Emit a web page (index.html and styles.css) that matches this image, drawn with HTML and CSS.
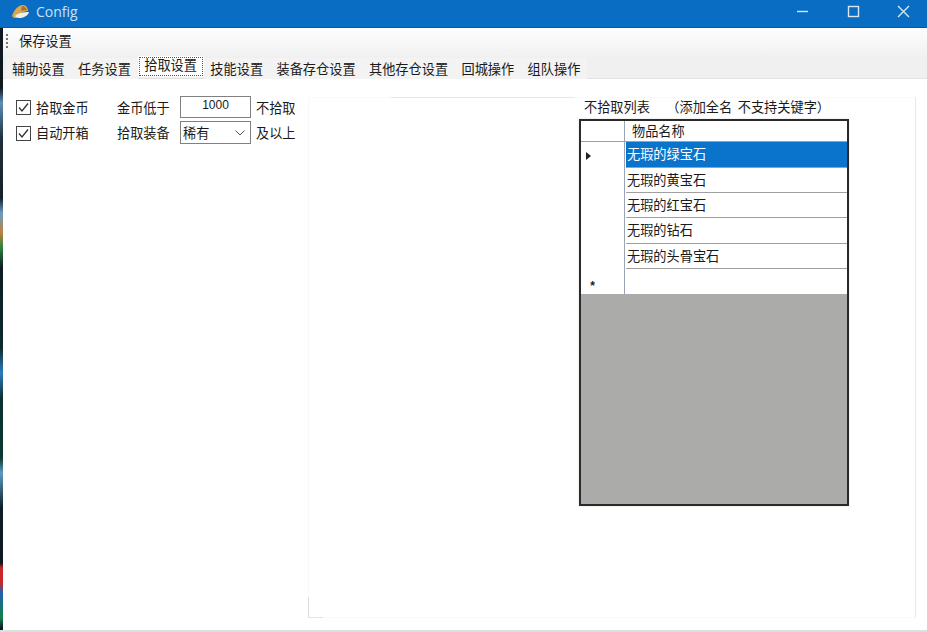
FILE: index.html
```html
<!DOCTYPE html>
<html lang="zh-CN">
<head>
  <meta charset="UTF-8">
  <title>Config</title>
  <link rel="stylesheet" href="styles.css">
</head>
<body>
  <div class="desk-strip"></div>
  <div class="window">
    <div class="titlebar">
      <svg class="app-icon" width="18" height="14" viewBox="0 0 18 14">
        <path d="M1 11 C3 5 7 0 12 0 C15 0 17 3 17 6 C13 6 9 8 7 12 C5 14 2 13 1 11 Z" fill="#d8a850"/>
        <path d="M4 11 C7 8 12 7 18 7 C17 11 12 13 8 13 C6 13 5 12 4 11 Z" fill="#f4efe0"/>
        <path d="M11 1 C13 1 15 3 16 5 C14 5 12 5 10 6 Z" fill="#a8702a"/>
      </svg>
      <span class="title">Config</span>
      <div class="win-buttons">
        <svg class="win-btn" width="50" height="28" viewBox="0 0 50 28"><path d="M22 11.5 H33" stroke="#d4e8f8" stroke-width="1.4"/></svg>
        <svg class="win-btn" width="50" height="28" viewBox="0 0 50 28"><rect x="23.5" y="6.5" width="10" height="10" fill="none" stroke="#d4e8f8" stroke-width="1.4"/></svg>
        <svg class="win-btn" width="50" height="28" viewBox="0 0 50 28"><path d="M23 6 L34 17 M34 6 L23 17" stroke="#d4e8f8" stroke-width="1.4"/></svg>
      </div>
    </div>

    <div class="toolbar">
      <span class="grip"></span>
      <span class="tool-item">保存设置</span>
    </div>

    <div class="tabs">
      <span class="tab">辅助设置</span>
      <span class="tab">任务设置</span>
      <span class="tab active">拾取设置</span>
      <span class="tab">技能设置</span>
      <span class="tab">装备存仓设置</span>
      <span class="tab">其他存仓设置</span>
      <span class="tab">回城操作</span>
      <span class="tab">组队操作</span>
    </div>

    <div class="content">
      <div class="left-col">
        <div class="form-row">
          <label class="check-label">
            <svg class="checkbox" width="15" height="15" viewBox="0 0 15 15"><rect x="0.5" y="0.5" width="14" height="14" fill="#fff" stroke="#444"/><path d="M3 7.5 L6 11 L12 3.5" fill="none" stroke="#333" stroke-width="1.3"/></svg>
            拾取金币
          </label>
          <span class="field-label">金币低于</span>
          <div class="text-box">1000</div>
          <span class="after">不拾取</span>
        </div>
        <div class="form-row tall">
          <label class="check-label">
            <svg class="checkbox" width="15" height="15" viewBox="0 0 15 15"><rect x="0.5" y="0.5" width="14" height="14" fill="#fff" stroke="#444"/><path d="M3 7.5 L6 11 L12 3.5" fill="none" stroke="#333" stroke-width="1.3"/></svg>
            自动开箱
          </label>
          <span class="field-label">拾取装备</span>
          <div class="combo">
            <span>稀有</span>
            <svg width="10" height="6" viewBox="0 0 10 6"><path d="M0.5 0.5 L5 5 L9.5 0.5" fill="none" stroke="#555"/></svg>
          </div>
          <span class="after">及以上</span>
        </div>
      </div>

      <div class="group">
        <div class="group-label">不拾取列表 &nbsp; （添加全名 不支持关键字）</div>
        <div class="grid-view">
          <div class="grid-row head"><span class="row-head"></span><span class="cell head-cell">物品名称</span></div>
          <div class="grid-row selected"><span class="row-head"><i class="arrow"></i></span><span class="cell">无瑕的绿宝石</span></div>
          <div class="grid-row"><span class="row-head"></span><span class="cell">无瑕的黄宝石</span></div>
          <div class="grid-row"><span class="row-head"></span><span class="cell">无瑕的红宝石</span></div>
          <div class="grid-row"><span class="row-head"></span><span class="cell">无瑕的钻石</span></div>
          <div class="grid-row"><span class="row-head"></span><span class="cell">无瑕的头骨宝石</span></div>
          <div class="grid-row new-row"><span class="row-head"><b class="star">*</b></span><span class="cell"></span></div>
          <div class="grid-empty"></div>
        </div>
      </div>
    </div>
  </div>
</body>
</html>
```

FILE: styles.css
```css
* { box-sizing: border-box; }
html, body {
  margin: 0;
  height: 632px;
  overflow: hidden;
}
body {
  display: flex;
  font-family: "Noto Sans CJK SC", "Liberation Sans", sans-serif;
  font-size: 13.2px;
  color: #1a1a1a;
  background: #fff;
}
.desk-strip {
  width: 3px;
  margin-top: 28px;
  background: linear-gradient(to bottom, #101820 0, #101820 60px, #5c8fb8 75px, #20303c 110px, #14202a 170px, #6a9cc4 185px, #c08040 205px, #2a8040 220px, #0c1c20 240px, #0c2a30 320px, #2c7cc0 345px, #0c3030 370px, #0c3830 430px, #5c9cc0 445px, #0c1c28 480px, #101820 535px, #c82828 540px, #c82828 555px, #2060b0 565px, #108048 590px, #101828 600px);
}
.window {
  flex: 1;
  display: flex;
  flex-direction: column;
  min-width: 0;
  margin-left: -3px;
  border-bottom: 2px solid #d8e0e2;
}
.titlebar {
  height: 28px;
  flex: none;
  display: flex;
  align-items: center;
  background: #0a6dc4;
  border-bottom: 1px solid #0a5c8c;
  padding-left: 11px;
}
.app-icon { margin-right: 7px; margin-top: -4px; }
.title {
  font-family: "Open Sans", "Liberation Sans", sans-serif;
  font-size: 14px;
  color: #c8e2f6;
  margin-top: -4px;
}
.win-buttons {
  display: flex;
  margin-left: auto;
  margin-right: 2px;
  align-self: flex-start;
}
.win-btn { display: block; }
.toolbar {
  height: 27px;
  flex: none;
  display: flex;
  align-items: center;
  margin-left: 3px;
  padding-left: 3px;
  background: linear-gradient(to bottom, #fdfdfd, #f2f2f2);
}
.grip {
  width: 2px;
  height: 16px;
  margin-top: 1px;
  background: repeating-linear-gradient(to bottom, #777 0, #777 2px, transparent 2px, transparent 4px);
}
.tool-item { margin-left: 11px; margin-top: -3px; }
.tabs {
  height: 24px;
  flex: none;
  display: flex;
  align-items: flex-end;
  margin-left: 3px;
  padding-left: 2.3px;
  background: #f0f0f0;
  border-bottom: 1px solid #e2e2e2;
}
.tab {
  height: 21px;
  padding: 0 6.7px;
  line-height: 21px;
  white-space: nowrap;
  background: #f3f3f3;
  margin-bottom: -1px;
}
.tab.active {
  height: 21px;
  margin-bottom: 1px;
  line-height: 17px;
  background: #fff;
  outline: 1px dotted #555;
  outline-offset: -2px;
}
.content {
  flex: 1;
  display: flex;
  margin-left: 3px;
  background: #fff;
  min-height: 0;
}
.left-col {
  width: 305px;
  flex: none;
  padding: 17px 0 0 13px;
}
.form-row {
  display: flex;
  align-items: center;
  height: 22px;
  margin-bottom: 4px;
}
.form-row.tall { height: 23px; margin-top: -1px; }
.check-label {
  width: 101px;
  flex: none;
  display: flex;
  align-items: center;
  gap: 5px;
}
.checkbox { margin-top: 1px; }
.field-label { width: 63px; flex: none; }
.text-box {
  width: 71px;
  height: 22px;
  flex: none;
  border: 1px solid #808080;
  text-align: center;
  font-family: "Liberation Sans", sans-serif;
  font-size: 12px;
  line-height: 17px;
}
.combo {
  width: 71px;
  height: 23px;
  flex: none;
  display: flex;
  align-items: center;
  justify-content: space-between;
  padding: 0 5px 0 2px;
  border: 1px solid #808080;
}
.after { margin-left: 5px; }
.group {
  position: relative;
  width: 608px;
  height: 521px;
  margin-top: 18px;
  padding: 0 0 0 270px;
  border: 1px solid #f9f9f9;
  border-right-color: #e4e8f0;
}
.group::before {
  content: "";
  position: absolute;
  left: -1px;
  bottom: -1px;
  width: 14px;
  height: 20px;
  border-left: 1px solid #dcdcdc;
  border-bottom: 1px solid #e6e6e6;
}
.group::after {
  content: "";
  position: absolute;
  left: 82px;
  right: 340px;
  top: -1px;
  height: 1px;
  background: #e8e8e8;
}
.group-label {
  height: 21px;
  padding-left: 5px;
  line-height: 18px;
  white-space: nowrap;
  word-spacing: 2.5px;
}
.grid-view {
  width: 270px;
  height: 387px;
  display: flex;
  flex-direction: column;
  border: 2px solid #2a2a2a;
  background: #fff;
  box-shadow: 0 0 2px #ddd;
}
.grid-row {
  display: flex;
  height: 25.4px;
  flex: none;
}
.grid-row.head { height: 20.5px; border-bottom: 1px solid #a0a0a0; }
.grid-row.selected { height: 26px; }
.grid-row.new-row { height: 25px; }
.row-head {
  width: 44px;
  flex: none;
  display: flex;
  align-items: center;
  justify-content: center;
  border-right: 1px solid #9aa4b4;
  margin-right: 1px;
}
.cell {
  flex: 1;
  padding-left: 1px;
  line-height: 24px;
  border-bottom: 1px solid #a0a0a0;
  white-space: nowrap;
}
.head-cell {
  padding-left: 6px;
  line-height: 19px;
  border-bottom: 0;
}
.new-row .cell { border-bottom: 0; }
.selected .cell {
  background: #0a74cc;
  color: #fff;
}
.arrow {
  width: 0;
  height: 0;
  border-left: 5px solid #222;
  border-top: 4.5px solid transparent;
  border-bottom: 4.5px solid transparent;
  margin-right: 28px;
  margin-top: 2px;
}
.star {
  font-size: 12px;
  font-weight: 700;
  font-family: "Liberation Sans", sans-serif;
  margin-right: 20px;
  margin-top: 8px;
}
.grid-empty {
  flex: 1;
  background: #ababa9;
}
```
